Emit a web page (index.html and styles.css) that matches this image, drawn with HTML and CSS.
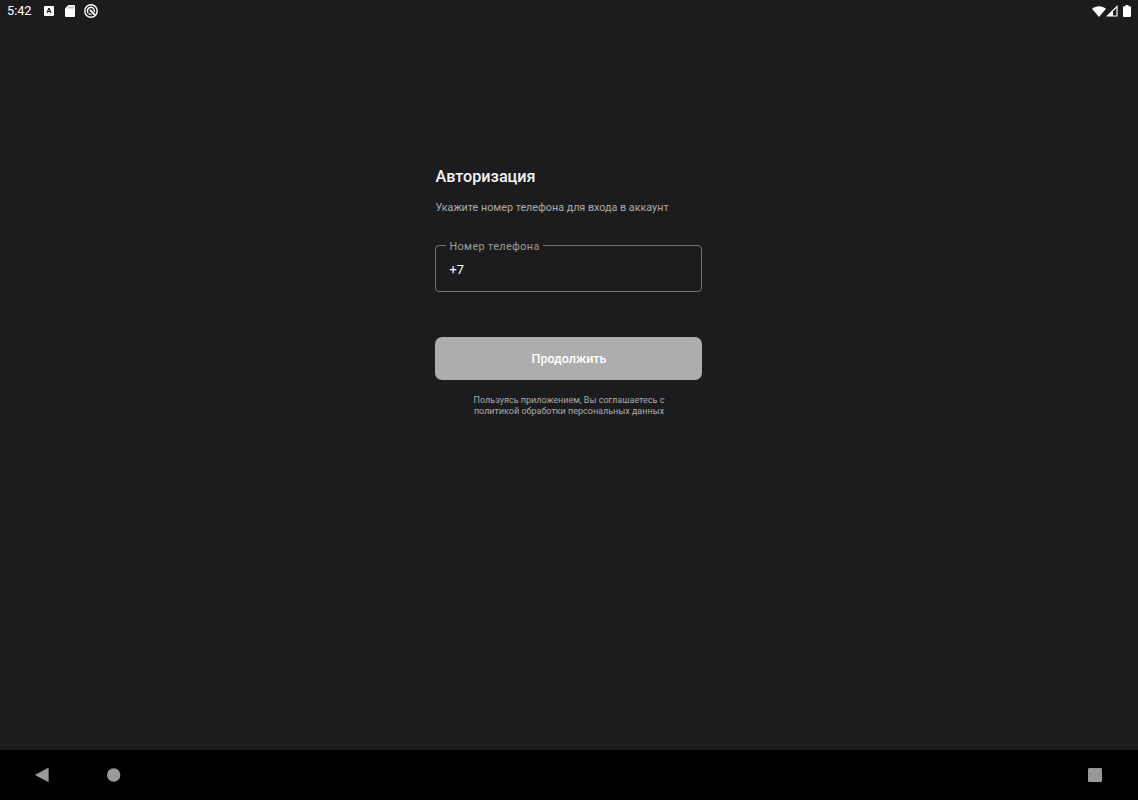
FILE: index.html
```html
<!DOCTYPE html>
<html lang="ru">
<head>
<meta charset="utf-8">
<title>Авторизация</title>
<link rel="stylesheet" href="styles.css">
</head>
<body>
<div class="screen">
  <header class="status">
    <span class="clock">5:42</span>
    <svg class="icon-app" viewBox="0 0 10 10" width="10" height="10"><rect width="10" height="10" rx="1" fill="#fff"/><path d="M3 7 4.700 2.500h.6L7 7M3.700 5.500h2.600" fill="none" stroke="#1c1c1e" stroke-width="1.100"/><path d="M5 8.700h3.500" stroke="#aaa" stroke-width=".5"/></svg>
    <svg class="icon-sd" viewBox="0 0 10 12" width="10" height="12"><path d="M3.300 0H9a1 1 0 0 1 1 1v10a1 1 0 0 1-1 1H1a1 1 0 0 1-1-1V3.400z" fill="#fff"/><path d="M4 1.500v2M6 1.500v2M8 1.500v2" stroke="#777" stroke-width=".9"/></svg>
    <svg class="icon-debug" viewBox="0 0 14 14" width="14" height="14" fill="none" stroke="#fff"><circle cx="7" cy="7" r="6.200" stroke-width="1.400"/><path d="M4.100 9A3.500 3.500 0 1 1 10.200 8" stroke-width="1.500"/><path d="m6 5.800 4.800 5" stroke-width="1.900"/><path d="M4.500 9.500c1.200.8 2.300.9 3.300.5" stroke-width="1.200"/></svg>
    <span class="signals">
      <svg viewBox="0 0 14 11" width="14" height="11"><path d="M0 2.800C4 -.6 10 -.6 14 2.800L7 11z" fill="#fff"/></svg>
      <svg viewBox="0 0 12 12" width="12" height="12"><path d="M11 1.500V11H1.300z" fill="none" stroke="#fff" stroke-width="1.200"/><path d="M7 5.500V11H1.300z" fill="#fff"/></svg>
      <svg class="battery" viewBox="0 0 8 12" width="8" height="12"><path d="M2.500 0h3v1.300H7a1 1 0 0 1 1 1V11a1 1 0 0 1-1 1H1a1 1 0 0 1-1-1V2.300a1 1 0 0 1 1-1h1.500z" fill="#fff"/></svg>
    </span>
  </header>
  <main class="form">
    <h1 class="title">Авторизация</h1>
    <p class="hint">Укажите номер телефона для входа в аккаунт</p>
    <fieldset class="field">
      <legend class="label">Номер телефона</legend>
      <div class="value">+7</div>
    </fieldset>
    <button class="submit">Продолжить</button>
    <p class="terms">Пользуясь приложением, Вы соглашаетесь с<br>политикой обработки персональных данных</p>
  </main>
  <nav class="nav">
    <svg viewBox="0 0 14 16" width="14" height="16"><path d="M13.300 1v13.800L.4 7.900z" fill="#999" stroke="#999" stroke-width=".6" stroke-linejoin="round"/></svg>
    <svg class="home" viewBox="0 0 14 14" width="14" height="14"><circle cx="6.700" cy="7" r="6.700" fill="#999"/></svg>
    <svg class="recent" viewBox="0 0 14 14" width="14" height="14"><rect width="14" height="14" rx="1.200" fill="#999"/></svg>
  </nav>
</div>
</body>
</html>
```
FILE: styles.css
```css
* { box-sizing: border-box; }
body { margin: 0; background: #1c1c1e; font-family: Roboto, "Noto Sans", sans-serif; color: #fff; }
svg { display: block; flex: none; }
.screen { width: 1138px; height: 800px; display: flex; flex-direction: column; overflow: hidden; }
.status { height: 22px; display: flex; align-items: center; padding: 0 7px; }
.clock { font-size: 12.700px; line-height: 22px; width: 36.600px; }
.icon-sd { margin-left: 11px; }
.icon-debug { margin-left: 9.400px; }
.signals { display: flex; align-items: center; margin-left: auto; }
.battery { margin-left: 5px; }
.form { flex: 1; width: 267px; margin: 0 0 0 435px; padding-top: 145px; display: flex; flex-direction: column; }
.title { margin: 0 0 0 .5px; font-size: 16.200px; line-height: 20px; font-weight: 500; color: #f5f5f5; }
.hint { margin: 14px 0 0 .5px; font-size: 10.750px; line-height: 14px; color: #aaa; white-space: nowrap; }
.field { height: 54px; margin: 23px 0 0; padding: 0 12px 0 10px; border: 1px solid #737373; border-radius: 4px; min-width: 0; }
.label { padding: 2px 3.500px 0; font-size: 10.800px; line-height: 13px; letter-spacing: .38px; color: #9c9c9c; }
.value { padding: 9px 0 0 3.500px; font-size: 12.700px; line-height: 15px; }
.submit { height: 43px; flex: none; margin: 45px 0 0; border: 0; border-radius: 7px; background: #adadad; color: #fff; font: 500 12.500px/43px Roboto, sans-serif; padding: 0 0 0 1px; }
.terms { margin: 15px 0 0; padding-left: 1px; font-size: 9px; line-height: 11px; text-align: center; color: #aaa; }
.nav { height: 50px; flex: none; background: #000; display: flex; align-items: center; padding: 0 36px 0 35px; }
.home { margin-left: 58px; }
.recent { margin-left: auto; }
```
